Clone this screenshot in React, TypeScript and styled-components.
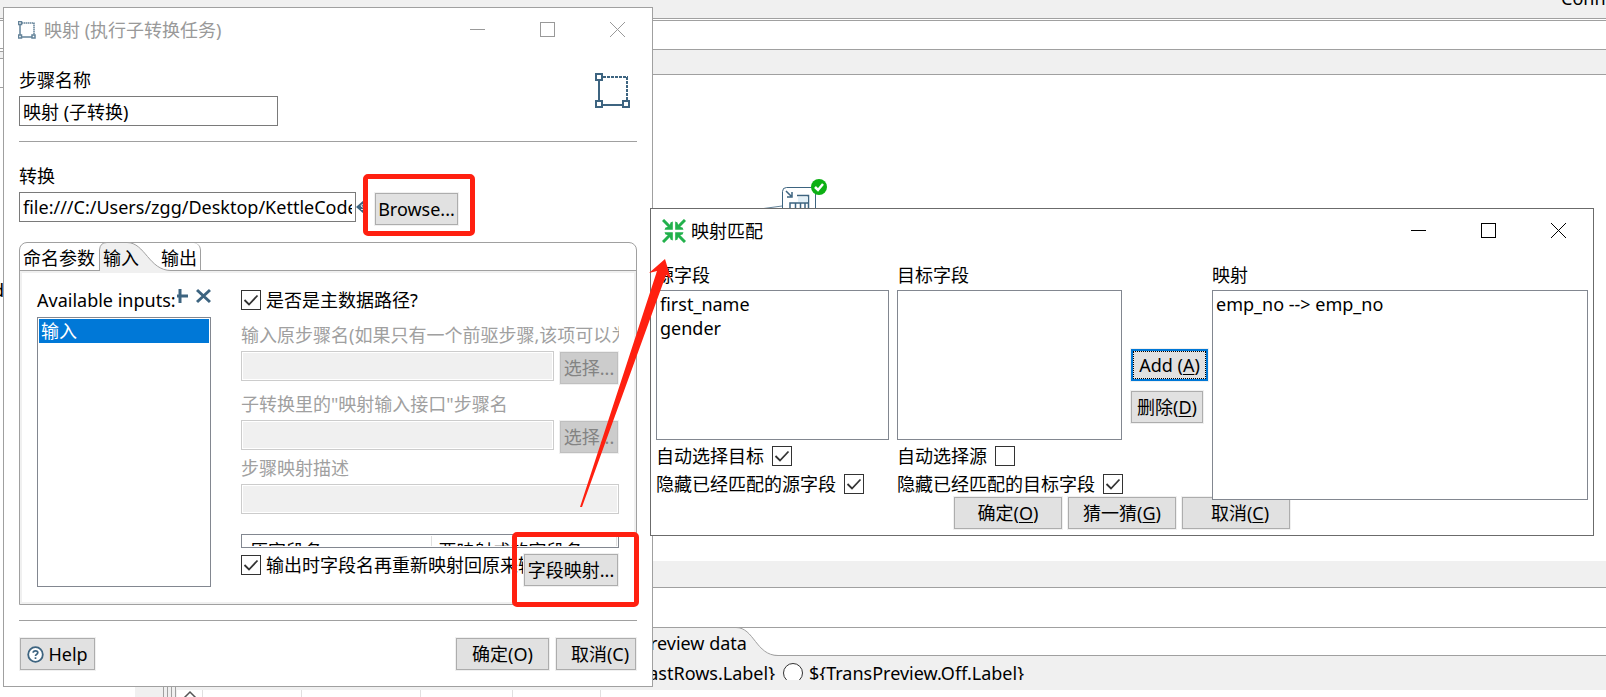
import React, { useState } from "react";
import styled, { createGlobalStyle, css } from "styled-components";

const line = "#a0a0a0";
const face = "#f0f0f0";
const steel = "#3d6480";

const GlobalStyle = createGlobalStyle`
  * { box-sizing: border-box; }
  body {
    margin: 0;
    color: #000;
    background: #fff;
    font: 18px/24px "Noto Sans", "Noto Sans CJK SC", sans-serif;
  }
  button, input { font: inherit; color: inherit; }
  u { text-underline-offset: 2px; text-decoration-thickness: 1px; }
`;

/* ---------- main application behind the dialogs ---------- */

const Desktop = styled.div`
  position: relative;
  display: flex;
  flex-direction: column;
  height: 100vh;
  overflow: hidden;
`;

const Toolbar = styled.header`
  display: flex;
  justify-content: flex-end;
  align-items: flex-start;
  height: 19px;
  overflow: hidden;
  background: ${face};
  border-bottom: 1px solid ${line};
`;

const ConnectLabel = styled.span`
  width: 45px;
  margin-top: -14px;
  white-space: nowrap;
`;

const Workspace = styled.div`
  display: flex;
  flex: 1;
  min-height: 0;
  margin-top: 1px;
  border-top: 1px solid ${line};
`;

const SideView = styled.aside`
  width: 135px;
  overflow: hidden;
`;

const SideBand = styled.div<{ $height: number; $fill?: string }>`
  height: ${(p) => p.$height}px;
  background: ${(p) => p.$fill ?? "#fff"};
  border-bottom: 1px solid ${line};
`;

const TreeItem = styled.div`
  margin: 190px 0 0 -7px;
`;

const Sash = styled.div`
  display: flex;
  justify-content: flex-end;
  gap: 3px;
  width: 42px;
  padding-right: 1px;
  background: ${face};
`;

const SashLine = styled.span`
  width: 1px;
  background: ${line};
`;

const Editor = styled.main`
  display: flex;
  flex: 1;
  flex-direction: column;
  min-width: 0;
`;

const Band = styled.div<{ $height: number; $fill?: string }>`
  flex: none;
  height: ${(p) => p.$height}px;
  background: ${(p) => p.$fill ?? "#fff"};
  border-bottom: 1px solid ${line};
`;

const Canvas = styled.div`
  position: relative;
  flex: 1;
  min-height: 0;
`;

const CanvasNode = styled.svg`
  position: absolute;
  left: 583px;
  top: 100px;
`;

const PreviewTabs = styled.div`
  display: flex;
  flex: none;
  height: 28px;
  padding-left: 455px;
  border-bottom: 1px solid ${line};
`;

const PreviewOptions = styled.div`
  display: flex;
  flex: none;
  height: 34px;
  background: ${face};
  border-bottom: 10px solid ${face};
  overflow: hidden;
`;

const RadioLabel = styled.label<{ $end?: boolean }>`
  display: flex;
  align-items: center;
  gap: 6px;
  height: 34px;
  white-space: nowrap;
  ${(p) =>
    p.$end &&
    css`
      justify-content: flex-end;
      width: 598px;
      margin-right: 8px;
    `}
`;

const Radio = styled.input`
  appearance: none;
  flex: none;
  width: 20px;
  height: 20px;
  margin: 0;
  background: #fff;
  border: 1px solid #333;
  border-radius: 50%;
`;

const PreviewGrid = styled.div`
  display: flex;
  flex: none;
  height: 7px;
  overflow: hidden;
`;

const GridColumn = styled.div<{ $width: number }>`
  width: ${(p) => p.$width}px;
  border-right: 1px solid #e0e0e0;
  text-align: center;
  line-height: 0;
`;

/* ---------- windows ---------- */

const Window = styled.section<{ $active?: boolean }>`
  position: absolute;
  isolation: isolate;
  display: flex;
  flex-direction: column;
  background: #fff;
  border: 1px solid ${(p) => (p.$active ? "#6b6b6b" : line)};
`;

const StepWindow = styled(Window)`
  left: 3px;
  top: 7px;
  width: 650px;
`;

const MatchWindow = styled(Window)`
  left: 650px;
  right: 12px;
  top: 208px;
`;

const TitleBar = styled.div<{ $active?: boolean }>`
  display: flex;
  align-items: center;
  height: 43px;
  color: ${(p) => (p.$active ? "#000" : "#999")};
`;

const TitleIcon = styled.span<{ $pad: number; $gap: number }>`
  display: flex;
  padding: 0 ${(p) => p.$gap}px 0 ${(p) => p.$pad}px;
`;

const Title = styled.h1`
  flex: 1;
  margin: 0;
  font: inherit;
`;

const Caption = styled.button`
  display: flex;
  align-items: center;
  justify-content: center;
  width: 70px;
  height: 42px;
  padding: 0;
  background: none;
  border: 0;
`;

const PushButton = styled.button<{ $width?: number; $lead?: number; $focus?: boolean }>`
  flex: none;
  display: flex;
  align-items: center;
  justify-content: center;
  gap: 4px;
  width: ${(p) => p.$width}px;
  height: 32px;
  padding: 0 0 0 ${(p) => p.$lead ?? 0}px;
  white-space: nowrap;
  background: #e1e1e1;
  border: 1px solid #adadad;
  box-shadow: 0 0 0 1px ${face};
  ${(p) =>
    p.$focus &&
    css`
      border: 2px solid #0078d7;
      outline: 1px dotted #000;
      outline-offset: -3px;
    `}
  &:disabled {
    color: #838383;
    background: #ccc;
    border-color: #bfbfbf;
  }
`;

const Rule = styled.hr`
  width: 100%;
  height: 1px;
  margin: 0;
  background: ${line};
  border: 0;
`;

const TextBox = styled.input`
  display: block;
  height: 30px;
  padding: 0 3px;
  background: #fff;
  border: 1px solid #7a7a7a;
  border-radius: 0;
  &:disabled {
    background: ${face};
    border-color: #ccc;
    box-shadow: inset 0 0 0 1px #fff;
  }
`;

const NameBox = styled(TextBox)`
  width: 259px;
`;

const PathBox = styled(TextBox)`
  width: 337px;
`;

const FillBox = styled(TextBox)`
  flex: 1;
  min-width: 0;
`;

const Field = styled.div`
  display: flex;
  flex-direction: column;
  gap: 4px;
`;

const FieldLabel = styled.label<{ $muted?: boolean }>`
  display: block;
  overflow: hidden;
  white-space: nowrap;
  color: ${(p) => (p.$muted ? line : "#000")};
`;

const StepBody = styled.div`
  display: flex;
  flex-direction: column;
  padding: 17px 15px 16px;
`;

const StepHeader = styled.div`
  display: flex;
  justify-content: space-between;
  padding: 0 6px 15px 0;
`;

const HeaderIcon = styled.span`
  padding-top: 5px;
`;

const PathSection = styled.div`
  padding: 22px 0 20px;
`;

const PathRow = styled.div`
  display: flex;
  align-items: center;
  height: 30px;
`;

const BrowseSlot = styled.span`
  padding: 3px 0 0 11px;
`;

const Folder = styled.div`
  border: 1px solid ${line};
  border-radius: 8px 8px 0 0;
`;

const TabStrip = styled.div`
  display: flex;
  height: 28px;
  border-bottom: 1px solid ${line};
`;

const Tab = styled.button<{ $width: number; $lead?: number; $last?: boolean }>`
  position: relative;
  width: ${(p) => p.$width}px;
  height: 28px;
  padding: 2px 3px 0 ${(p) => p.$lead ?? 3}px;
  text-align: left;
  white-space: nowrap;
  background: none;
  border: 0;
  ${(p) =>
    p.$last &&
    css`
      height: 27px;
      border-right: 1px solid ${line};
      border-radius: 0 7px 0 0;
    `}
`;

const TabShape = styled.svg`
  position: absolute;
  left: 0;
  top: -1px;
`;

const TabText = styled.span`
  position: relative;
`;

const TabPage = styled.div`
  display: grid;
  grid-template-columns: 174px minmax(0, 1fr);
  gap: 30px;
  padding: 15px;
  border: 2px solid ${face};
`;

const InputsColumn = styled.div`
  display: flex;
  flex-direction: column;
  gap: 5px;
`;

const InputsHeader = styled.div`
  display: flex;
  align-items: center;
  height: 24px;
`;

const InputsLabel = styled.span`
  flex: none;
  width: 140px;
  white-space: nowrap;
`;

const ToolButton = styled.button`
  display: flex;
  height: 24px;
  padding: 0 0 8px;
  background: none;
  border: 0;
`;

const ListBox = styled.ul<{ $height: number }>`
  height: ${(p) => p.$height}px;
  margin: 0;
  padding: 1px;
  list-style: none;
  background: #fff;
  border: 1px solid #828790;
`;

const ListItem = styled.li<{ $selected?: boolean }>`
  height: 24px;
  padding: 0 2px;
  color: ${(p) => (p.$selected ? "#fff" : "#000")};
  background: ${(p) => (p.$selected ? "#0078d7" : "transparent")};
`;

const InputForm = styled.div`
  display: flex;
  flex-direction: column;
`;

const FormField = styled(Field)<{ $before: number }>`
  margin-top: ${(p) => p.$before}px;
`;

const FormRow = styled.div`
  display: flex;
  gap: 6px;
  height: 30px;
  padding-right: 1px;
`;

const SelectSlot = styled.span`
  padding-top: 1px;
`;

const FieldTableFrame = styled.div`
  height: 14px;
  margin: 20px 0 5px;
  padding: 1px;
  border: 1px solid #828790;
`;

const FieldTableClip = styled.div`
  height: 10px;
  overflow: hidden;
`;

const FieldTable = styled.table`
  width: 100%;
  border-collapse: collapse;
  table-layout: fixed;
`;

const HeadCell = styled.th<{ $width?: number }>`
  width: ${(p) => (p.$width ? p.$width + "px" : "auto")};
  height: 28px;
  padding: 3px 7px 0;
  font-weight: 400;
  text-align: left;
  vertical-align: top;
  border-right: 1px solid #e0e0e0;
`;

const CheckLabel = styled.label<{ $after?: boolean }>`
  display: flex;
  flex-direction: ${(p) => (p.$after ? "row-reverse" : "row")};
  justify-content: ${(p) => (p.$after ? "flex-end" : "flex-start")};
  align-items: center;
  gap: ${(p) => (p.$after ? 8 : 5)}px;
  flex: 1;
  min-width: 0;
  height: 24px;
  overflow: ${(p) => (p.$after ? "visible" : "hidden")};
  white-space: nowrap;
`;

const CheckBoxFrame = styled.span`
  position: relative;
  flex: none;
  width: 20px;
  height: 20px;
`;

const CheckInput = styled.input`
  appearance: none;
  display: block;
  width: 20px;
  height: 20px;
  margin: 0;
  background: #fff;
  border: 1px solid #333;
`;

const CheckMark = styled.svg`
  position: absolute;
  inset: 0;
  pointer-events: none;
`;

const CheckRow = styled.div`
  display: flex;
  height: 24px;
`;

const RemapRow = styled.div`
  display: flex;
  align-items: flex-start;
  height: 34px;
  padding-right: 1px;
`;

const RemapSlot = styled.span`
  padding: 1px 0 0 1px;
`;

const FolderGap = styled.div`
  height: 15px;
`;

const ButtonBar = styled.div`
  display: flex;
  gap: 7px;
  padding: 17px 1px 0;
`;

const Spacer = styled.span`
  flex: 1;
`;

/* ---------- match window ---------- */

const MatchBody = styled.div`
  padding: 11px 5px 6px;
`;

const MatchColumns = styled.div`
  display: grid;
  grid-template-columns: 233px 225px 74px minmax(0, 1fr);
  column-gap: 8px;
  height: 234px;
`;

const MatchColumn = styled.div`
  position: relative;
  z-index: 1;
`;

const ColumnTitle = styled.div`
  height: 24px;
  margin-bottom: 3px;
`;

const Options = styled.div`
  display: flex;
  flex-direction: column;
  gap: 4px;
  padding-top: 4px;
`;

const MoveButtons = styled.div`
  display: flex;
  flex-direction: column;
  gap: 10px;
  padding: 86px 0 0 1px;
`;

const MatchButtons = styled.div`
  display: flex;
  justify-content: center;
  gap: 6px;
`;

/* ---------- red marks ---------- */

const MarkLayer = styled.div`
  position: absolute;
  inset: 0;
  pointer-events: none;
`;

const MarkBox = styled.div<{ $x: number; $y: number; $w: number; $h: number }>`
  position: absolute;
  left: ${(p) => p.$x}px;
  top: ${(p) => p.$y}px;
  width: ${(p) => p.$w}px;
  height: ${(p) => p.$h}px;
  border: 5px solid #ff2010;
  border-radius: 5px;
`;

const MarkArrow = styled.svg`
  position: absolute;
  left: 570px;
  top: 250px;
`;

/* ---------- drawings ---------- */

const MappingIcon = ({ size, faded }: { size: number; faded?: boolean }) => (
  <svg width={size} height={size} viewBox="0 0 36 36" fill="none" stroke={steel} strokeWidth={faded ? 3 : 2} opacity={faded ? 0.8 : 1}>
    <path d="M4 8V28M8 32H28" />
    <path d="M8 4H33M32 4V28" strokeDasharray="3 1" />
    <rect x="1" y="1" width="6" height="6" />
    <rect x="1" y="28" width="6" height="6" />
    <rect x="28" y="28" width="6" height="6" />
  </svg>
);

const ConvergeIcon = () => (
  <svg width="24" height="24" viewBox="0 0 24 24" fill="#22b14c" stroke="#22b14c">
    {[0, 90, 180, 270].map((turn) => (
      <g key={turn} transform={`rotate(${turn} 12 12)`}>
        <path d="M1 1L8 8" strokeWidth="3" />
        <path d="M2.500 10.800H10.800V2.500L8.500 3.500L8 5.500L5.500 8L3.500 8.500Z" stroke="none" />
      </g>
    ))}
  </svg>
);

const VariableIcon = () => (
  <svg width="8" height="14" viewBox="0 0 8 14">
    <path d="M0 7L8 0V14Z" fill={steel} />
    <path d="M8 4.500Q4.500 4.500 5 6Q5.500 7 8 7.500M5 9.500H8" stroke="#dfe8ee" fill="none" />
  </svg>
);

const PlusIcon = () => (
  <svg width="12" height="16" viewBox="0 0 12 16" stroke={steel} strokeWidth="3" fill="none">
    <path d="M3 1V15M0 8H11" />
  </svg>
);

const CrossIcon = () => (
  <svg width="15" height="16" viewBox="0 0 15 16" stroke={steel} strokeWidth="3" fill="none">
    <path d="M1 2L14 14M14 2L1 14" />
  </svg>
);

const HelpIcon = () => (
  <svg width="17" height="17" viewBox="0 0 17 17" fill="none" stroke={steel}>
    <circle cx="8.500" cy="8.500" r="7.300" fill="#fff" strokeWidth="1.800" />
    <path d="M6.200 6.800Q6.200 4.800 8.500 4.800Q10.800 4.800 10.800 6.600Q10.800 7.800 9.500 8.400Q8.500 8.900 8.500 10M8.500 11.200V13" strokeWidth="1.700" />
  </svg>
);

const NodeDrawing = () => (
  <CanvasNode width="70" height="60" viewBox="0 0 70 60" fill="none" stroke={steel}>
    <path d="M0 34L22 31M4 36L22 34" strokeWidth="0.800" />
    <rect x="22.500" y="12.500" width="33" height="34" rx="4" fill="#fff" />
    <path d="M26 16L31 21M32 17V22H27" strokeWidth="1.500" />
    <path d="M37 20.500H48.500V40M30 40V28H48M35.500 28V40M40.500 28V40M45 28V40" strokeWidth="1.500" />
    <path d="M38 22H48V27H38Z" fill="#e3f0f7" stroke="none" />
    <circle cx="59" cy="12" r="8" fill="#0db014" stroke="none" />
    <path d="M55 12L58 15L63 9" stroke="#fff" strokeWidth="2.500" />
  </CanvasNode>
);

const CaptionButtons = () => (
  <>
    <Caption aria-label="Minimize">
      <svg width="15" height="15" stroke="currentColor" fill="none"><path d="M0 7.500H15" /></svg>
    </Caption>
    <Caption aria-label="Maximize">
      <svg width="15" height="15" stroke="currentColor" fill="none"><rect x="0.500" y="0.500" width="14" height="14" /></svg>
    </Caption>
    <Caption aria-label="Close">
      <svg width="15" height="15" stroke="currentColor" fill="none"><path d="M0 0L15 15M15 0L0 15" /></svg>
    </Caption>
  </>
);

type CheckProps = { text: string; initial?: boolean; after?: boolean };

const Check = ({ text, initial = false, after }: CheckProps) => {
  const [on, setOn] = useState(initial);
  return (
    <CheckLabel $after={after}>
      <CheckBoxFrame>
        <CheckInput type="checkbox" checked={on} onChange={() => setOn(!on)} />
        {on && (
          <CheckMark width="20" height="20" viewBox="0 0 20 20" fill="none" stroke="#333" strokeWidth="1.800">
            <path d="M3.500 10L8 14.500L16.500 5.500" />
          </CheckMark>
        )}
      </CheckBoxFrame>
      <span>{text}</span>
    </CheckLabel>
  );
};

/* ---------- composition ---------- */

const SpoonWindow = () => (
  <>
    <Toolbar><ConnectLabel>Conn</ConnectLabel></Toolbar>
    <Workspace>
      <SideView>
        <SideBand $height={28} />
        <SideBand $height={3} />
        <SideBand $height={7} $fill={face} />
        <SideBand $height={29} />
        <TreeItem>d</TreeItem>
      </SideView>
      <Sash><SashLine /><SashLine /><SashLine /><SashLine /></Sash>
      <Editor>
        <Band $height={29} />
        <Band $height={25} $fill={face} />
        <Canvas><NodeDrawing /></Canvas>
        <Band $height={27} $fill={face} />
        <Band $height={40} />
        <PreviewTabs>
          <Tab $width={150} $lead={7}>
            <TabShape width="150" height="29" viewBox="0 0 150 29">
              <path d="M0 29V0.500H104C122 0.500 124 28.500 146 28.500V29Z" fill={face} />
              <path d="M0 0.500H104C122 0.500 124 28.500 146 28.500" fill="none" stroke={line} />
            </TabShape>
            <TabText>Preview data</TabText>
          </Tab>
        </PreviewTabs>
        <PreviewOptions>
          <RadioLabel $end>
            <Radio type="radio" name="preview" />
            {"${TransPreview.LastRows.Label}"}
          </RadioLabel>
          <RadioLabel>
            <Radio type="radio" name="preview" />
            {"${TransPreview.Off.Label}"}
          </RadioLabel>
        </PreviewOptions>
        <PreviewGrid>
          <GridColumn $width={26}>
            <svg width="14" height="8" fill="none" stroke="#555" strokeWidth="1.500"><path d="M1 8L7 2L13 8" /></svg>
          </GridColumn>
          <GridColumn $width={99} />
          <GridColumn $width={119} />
          <GridColumn $width={92} />
          <GridColumn $width={88} />
        </PreviewGrid>
      </Editor>
    </Workspace>
  </>
);

const StepDialog = () => (
  <StepWindow>
    <TitleBar>
      <TitleIcon $pad={14} $gap={8}><MappingIcon size={18} faded /></TitleIcon>
      <Title>映射 (执行子转换任务)</Title>
      <CaptionButtons />
    </TitleBar>
    <StepBody>
      <StepHeader>
        <Field>
          <FieldLabel htmlFor="step">步骤名称</FieldLabel>
          <NameBox id="step" defaultValue="映射 (子转换)" />
        </Field>
        <HeaderIcon><MappingIcon size={36} /></HeaderIcon>
      </StepHeader>
      <Rule />
      <PathSection>
        <Field>
          <FieldLabel htmlFor="path">转换</FieldLabel>
          <PathRow>
            <PathBox id="path" defaultValue="file:///C:/Users/zgg/Desktop/KettleCode" />
            <VariableIcon />
            <BrowseSlot><PushButton $width={83}>Browse...</PushButton></BrowseSlot>
          </PathRow>
        </Field>
      </PathSection>
      <Folder>
        <TabStrip role="tablist">
          <Tab role="tab" $width={79}>命名参数</Tab>
          <Tab role="tab" $width={59} $lead={4} aria-selected="true">
            <TabShape width="74" height="29" viewBox="0 0 74 29">
              <path d="M0.500 29V8Q1 0.500 8 0.500H28C46 0.500 50 28.500 72 28.500V29Z" fill={face} />
              <path d="M0.500 29V8Q1 0.500 8 0.500H28C46 0.500 50 28.500 72 28.500" fill="none" stroke={line} />
            </TabShape>
            <TabText>输入</TabText>
          </Tab>
          <Tab role="tab" $width={43} $last>输出</Tab>
        </TabStrip>
        <TabPage>
          <InputsColumn>
            <InputsHeader>
              <InputsLabel>Available inputs:</InputsLabel>
              <ToolButton aria-label="Add input"><PlusIcon /></ToolButton>
              <Spacer />
              <ToolButton aria-label="Remove input"><CrossIcon /></ToolButton>
            </InputsHeader>
            <ListBox $height={270} role="listbox" aria-label="Available inputs">
              <ListItem $selected role="option" aria-selected="true">输入</ListItem>
            </ListBox>
          </InputsColumn>
          <InputForm>
            <CheckRow><Check text="是否是主数据路径?" initial /></CheckRow>
            <FormField $before={11}>
              <FieldLabel $muted htmlFor="source">输入原步骤名(如果只有一个前驱步骤,该项可以为空)</FieldLabel>
              <FormRow>
                <FillBox id="source" disabled />
                <SelectSlot><PushButton $width={58} disabled>选择...</PushButton></SelectSlot>
              </FormRow>
            </FormField>
            <FormField $before={11}>
              <FieldLabel $muted htmlFor="target">子转换里的"映射输入接口"步骤名</FieldLabel>
              <FormRow>
                <FillBox id="target" disabled />
                <SelectSlot><PushButton $width={58} disabled>选择...</PushButton></SelectSlot>
              </FormRow>
            </FormField>
            <FormField $before={6}>
              <FieldLabel $muted htmlFor="description">步骤映射描述</FieldLabel>
              <TextBox id="description" disabled />
            </FormField>
            <FieldTableFrame>
              <FieldTableClip>
                <FieldTable>
                  <thead>
                    <tr>
                      <HeadCell $width={188}>原字段名</HeadCell>
                      <HeadCell>要映射成的字段名</HeadCell>
                    </tr>
                  </thead>
                </FieldTable>
              </FieldTableClip>
            </FieldTableFrame>
            <RemapRow>
              <Check text="输出时字段名再重新映射回原来输入的名称" initial />
              <RemapSlot><PushButton $width={94}>字段映射...</PushButton></RemapSlot>
            </RemapRow>
          </InputForm>
        </TabPage>
      </Folder>
      <FolderGap />
      <Rule />
      <ButtonBar>
        <PushButton $width={75}><HelpIcon />Help</PushButton>
        <Spacer />
        <PushButton $width={93}>确定(O)</PushButton>
        <PushButton $width={80} $lead={8}>取消(C)</PushButton>
      </ButtonBar>
    </StepBody>
  </StepWindow>
);

const MatchDialog = () => (
  <MatchWindow $active>
    <TitleBar $active>
      <TitleIcon $pad={11} $gap={5}><ConvergeIcon /></TitleIcon>
      <Title>映射匹配</Title>
      <CaptionButtons />
    </TitleBar>
    <MatchBody>
      <MatchColumns>
        <MatchColumn>
          <ColumnTitle>源字段</ColumnTitle>
          <ListBox $height={150} role="listbox" aria-label="源字段">
            <ListItem role="option">first_name</ListItem>
            <ListItem role="option">gender</ListItem>
          </ListBox>
          <Options>
            <Check after text="自动选择目标" initial />
            <Check after text="隐藏已经匹配的源字段" initial />
          </Options>
        </MatchColumn>
        <MatchColumn>
          <ColumnTitle>目标字段</ColumnTitle>
          <ListBox $height={150} role="listbox" aria-label="目标字段" />
          <Options>
            <Check after text="自动选择源" />
            <Check after text="隐藏已经匹配的目标字段" initial />
          </Options>
        </MatchColumn>
        <MoveButtons>
          <PushButton $width={77} $focus><span>Add (<u>A</u>)</span></PushButton>
          <PushButton $width={72}><span>删除(<u>D</u>)</span></PushButton>
        </MoveButtons>
        <MatchColumn>
          <ColumnTitle>映射</ColumnTitle>
          <ListBox $height={210} role="listbox" aria-label="映射">
            <ListItem role="option">emp_no --&gt; emp_no</ListItem>
          </ListBox>
        </MatchColumn>
      </MatchColumns>
      <MatchButtons>
        <PushButton $width={108}><span>确定(<u>O</u>)</span></PushButton>
        <PushButton $width={108}><span>猜一猜(<u>G</u>)</span></PushButton>
        <PushButton $width={108} $lead={8}><span>取消(<u>C</u>)</span></PushButton>
      </MatchButtons>
    </MatchBody>
  </MatchWindow>
);

export default function App() {
  return (
    <Desktop>
      <GlobalStyle />
      <SpoonWindow />
      <StepDialog />
      <MatchDialog />
      <MarkLayer>
        <MarkBox $x={363} $y={174} $w={112} $h={62} />
        <MarkBox $x={512} $y={532} $w={127} $h={75} />
        <MarkArrow width="110" height="260" viewBox="0 0 110 260">
          <path d="M95 9L79 23L87 21L10 257L12 257L96 25L101 29Z" fill="#ff2010" />
        </MarkArrow>
      </MarkLayer>
    </Desktop>
  );
}
